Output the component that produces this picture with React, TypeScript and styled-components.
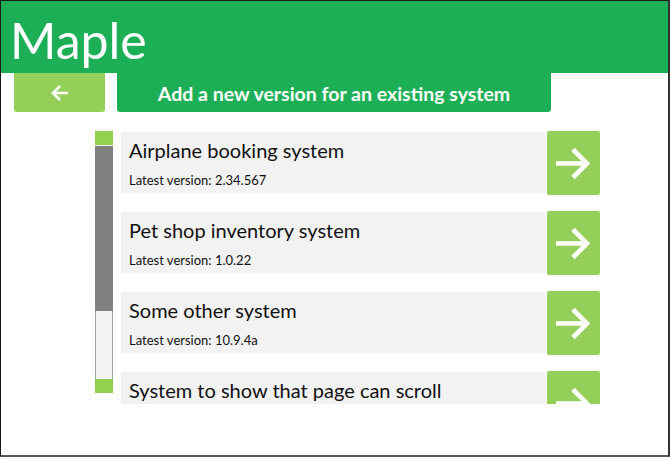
import React from 'react';
import styled, { createGlobalStyle } from 'styled-components';

const GlobalStyle = createGlobalStyle`
  html, body {
    margin: 0;
    padding: 0;
    background: #ffffff;
  }
  body {
    font-family: Lato, "Open Sans", sans-serif;
  }
`;

type System = {
  name: string;
  version: string;
};

const systems: System[] = [
  { name: 'Airplane booking system', version: '2.34.567' },
  { name: 'Pet shop inventory system', version: '1.0.22' },
  { name: 'Some other system', version: '10.9.4a' },
  { name: 'System to show that page can scroll', version: '0.0.1' },
];

const Frame = styled.div`
  width: 667px;
  height: 454px;
  border: 1px solid #1a1a1a;
  border-bottom: 2px solid #555;
  border-right: 2px solid #333;
  overflow: hidden;
`;

const Header = styled.header`
  height: 72px;
  background: #1caf55;
  display: flex;
  align-items: center;
  padding-left: 9px;
`;

const Logo = styled.h1`
  margin: 0;
  color: #ffffff;
  font-family: Lato, sans-serif;
  font-weight: 400;
  font-size: 50px;
  line-height: 1;
  padding-top: 5px;
`;

const Nav = styled.nav`
  display: flex;
  gap: 12px;
  padding-left: 13px;
`;

const BackButton = styled.button`
  width: 91px;
  height: 39px;
  border: none;
  border-radius: 0 0 3px 3px;
  background: #94cf5a;
  display: flex;
  align-items: center;
  justify-content: center;
  padding: 0;
  cursor: pointer;
`;

const PageTitle = styled.div`
  width: 434px;
  height: 39px;
  border-radius: 0 0 3px 3px;
  background: #1caf55;
  color: #ffffff;
  font-family: Lato, sans-serif;
  font-weight: 700;
  font-size: 19.5px;
  display: flex;
  align-items: center;
  justify-content: center;
  padding-top: 2px;
  box-sizing: border-box;
`;

const ListArea = styled.section`
  display: flex;
  gap: 8px;
  margin: 19px 0 0 94px;
  width: 505px;
  height: 273px;
`;

const ScrollBar = styled.div`
  width: 18px;
  height: 262px;
  display: flex;
  flex-direction: column;
`;

const ScrollEnd = styled.div`
  height: 14px;
  background: #92d050;
`;

const ScrollThumb = styled.div`
  height: 165px;
  background: #808080;
  border-top: 1px solid #f4f4f4;
`;

const ScrollTrack = styled.div`
  flex: 1;
  background: #f2f2f2;
  border-left: 1px solid #a0a0a0;
  border-right: 1px solid #a0a0a0;
`;

const List = styled.ul`
  list-style: none;
  margin: 0;
  padding: 0;
  flex: 1;
  height: 273px;
  overflow: hidden;
  display: flex;
  flex-direction: column;
  gap: 16px;
`;

const Row = styled.li`
  display: flex;
  align-items: flex-start;
  gap: 1px;
  flex-shrink: 0;
`;

const Card = styled.div`
  width: 425px;
  height: 61px;
  margin-top: 1px;
  background: #f2f2f2;
  box-sizing: border-box;
  padding: 6px 0 0 8px;
  color: #111;
`;

const Name = styled.div`
  font-family: Lato, sans-serif;
  font-size: 20px;
  line-height: 24px;
`;

const Version = styled.div`
  font-family: Lato, sans-serif;
  font-size: 13px;
  margin-top: 10px;
`;

const GoButton = styled.button`
  width: 53px;
  height: 64px;
  border: none;
  border-radius: 2px;
  background: #94cf5a;
  padding: 0;
  display: flex;
  align-items: center;
  justify-content: center;
  cursor: pointer;
`;

const BackArrow = () => (
  <svg width="20" height="18" viewBox="0 0 20 18">
    <path d="M18 9H3M10 2L3 9l7 7" fill="none" stroke="#fff" strokeWidth="2.6" />
  </svg>
);

const GoArrow = () => (
  <svg width="37" height="33" viewBox="0 0 37 33">
    <path d="M1 16.5h31M18 2.5l14 14-14 14" fill="none" stroke="#fff" strokeWidth="4.6" />
  </svg>
);

export default function App() {
  return (
    <Frame>
      <GlobalStyle />
      <Header>
        <Logo>Maple</Logo>
      </Header>
      <Nav>
        <BackButton aria-label="Back">
          <BackArrow />
        </BackButton>
        <PageTitle>Add a new version for an existing system</PageTitle>
      </Nav>
      <ListArea>
        <ScrollBar>
          <ScrollEnd />
          <ScrollThumb />
          <ScrollTrack />
          <ScrollEnd />
        </ScrollBar>
        <List>
          {systems.map((s) => (
            <Row key={s.name}>
              <Card>
                <Name>{s.name}</Name>
                <Version>Latest version: {s.version}</Version>
              </Card>
              <GoButton aria-label={`Open ${s.name}`}>
                <GoArrow />
              </GoButton>
            </Row>
          ))}
        </List>
      </ListArea>
    </Frame>
  );
}
